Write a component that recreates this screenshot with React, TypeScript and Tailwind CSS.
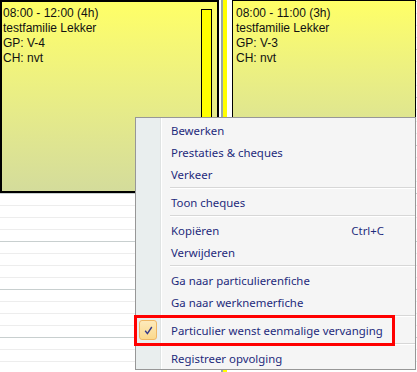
import React from "react";

type MenuEntry =
  | { kind: "item"; label: string; shortcut?: string; checked?: boolean }
  | { kind: "sep" };

const menuEntries: MenuEntry[] = [
  { kind: "item", label: "Bewerken" },
  { kind: "item", label: "Prestaties & cheques" },
  { kind: "item", label: "Verkeer" },
  { kind: "sep" },
  { kind: "item", label: "Toon cheques" },
  { kind: "sep" },
  { kind: "item", label: "Kopiëren", shortcut: "Ctrl+C" },
  { kind: "item", label: "Verwijderen" },
  { kind: "sep" },
  { kind: "item", label: "Ga naar particulierenfiche" },
  { kind: "item", label: "Ga naar werknemerfiche" },
  { kind: "sep" },
  { kind: "item", label: "Particulier wenst eenmalige vervanging", checked: true },
  { kind: "sep" },
  { kind: "item", label: "Registreer opvolging" },
];

const rows = Array.from({ length: 31 }, (_, i) => i);

const cardFont = { fontFamily: '"Liberation Sans", Arial, sans-serif' };
const menuFont = { fontFamily: '"Noto Sans", "Open Sans", sans-serif' };

const CheckBox = () => (
  <div className="ml-[3px] flex h-[20px] w-[18px] items-center justify-center rounded-[3px] border border-[#efb765] bg-gradient-to-b from-[#fdeabb] to-[#fbd98c]">
    <svg width="9" height="9" viewBox="0 0 9 9" fill="none">
      <path d="M1.2 4.8 L3.4 7.6 L7.8 1" stroke="#34398a" strokeWidth="1.4" />
    </svg>
  </div>
);

const ContextMenu = () => (
  <div
    className="absolute left-[135px] top-[117px] w-[281px] border border-[#979797] bg-[linear-gradient(to_right,#e9eeee_0,#e9eeee_24px,#e0e3e3_24px,#e0e3e3_25px,#ffffff_25px,#ffffff_26px,#f5f5f5_26px)] pt-px text-[11.4px] text-[#1e2b7c]"
    style={menuFont}
  >
    {menuEntries.map((e, i) =>
      e.kind === "sep" ? (
        <div key={i} className="h-[6px] pl-[34px] pt-[2px]">
          <div className="border-t border-b border-t-[#d7d7d7] border-b-white" />
        </div>
      ) : (
        <div key={i} className="flex h-[22px] items-center">
          <div className="flex w-[26px] items-center">{e.checked && <CheckBox />}</div>
          <span className="flex-1 pl-[9px] pt-px whitespace-nowrap">{e.label}</span>
          {e.shortcut && <span className="pr-[31px] pt-px">{e.shortcut}</span>}
        </div>
      )
    )}
  </div>
);

const App = () => {
  return (
    <div className="relative h-[372px] w-[417px] overflow-hidden bg-white">
      {/* day grid */}
      <div className="pt-px">
        {rows.map((i) => (
          <div
            key={i}
            className={`h-[12px] border-t ${i % 4 === 0 ? "border-[#c8cfcf]" : "border-[#ededed]"}`}
          />
        ))}
      </div>

      {/* appointments */}
      <div className="absolute left-0 top-0 flex items-start text-[12px] leading-[15px] text-[#111]" style={cardFont}>
        <div className="flex h-[193px] w-[219px] border-2 border-black bg-gradient-to-b from-[#ffff66] to-[#d4dc9b]">
          <div className="flex-1 pl-px pt-[4px]">
            <div>08:00 - 12:00 (4h)</div>
            <div>testfamilie Lekker</div>
            <div>GP: V-4</div>
            <div>CH: nvt</div>
          </div>
          <div className="mb-[3px] mr-[5px] mt-[7px] w-[11px] self-stretch border border-black bg-[#ffff00]" />
        </div>

        <div className="flex h-[372px] w-[13px]">
          <div className="w-[2px] bg-white" />
          <div className="w-[2px] bg-[#98a8a8]" />
          <div className="w-[4px] bg-[#ffff00]" />
          <div className="w-[5px] bg-white" />
        </div>

        <div className="h-[145px] w-[184px] border border-black bg-gradient-to-b from-[#ffff66] to-[#d8e096] pl-[3px] pt-[5px]">
          <div>08:00 - 11:00 (3h)</div>
          <div>testfamilie Lekker</div>
          <div>GP: V-3</div>
          <div>CH: nvt</div>
        </div>
      </div>

      <ContextMenu />

      {/* highlight */}
      <div className="absolute left-[134px] top-[315px] h-[31px] w-[261px] border-[3px] border-[#ff0000]" />
    </div>
  );
};

export default App;
